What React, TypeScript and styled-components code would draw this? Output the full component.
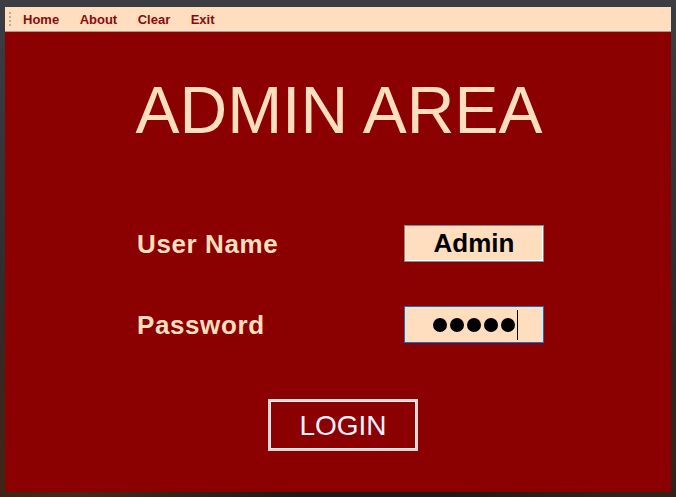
import React from "react";
import styled, { createGlobalStyle } from "styled-components";

const peach = "#FFDEBF";
const wine = "#8B0000";

const GlobalStyle = createGlobalStyle`
	html, body {
		margin: 0;
		padding: 0;
	}
	body {
		width: 676px;
		height: 497px;
		overflow: hidden;
		font-family: "Liberation Sans", Arial, sans-serif;
		background:
			radial-gradient(circle at 10% 95%, #4a2a18 0%, transparent 30%),
			radial-gradient(circle at 95% 90%, #3a2418 0%, transparent 25%),
			linear-gradient(180deg, #3d3e44 0%, #2c2c30 60%, #1d1a18 100%);
	}
`;

function App() {
	return (
		<>
			<GlobalStyle />
			<Desktop>
				<Window>
					<MenuBar>
						<Grip />
						<MenuItem>Home</MenuItem>
						<MenuItem>About</MenuItem>
						<MenuItem>Clear</MenuItem>
						<MenuItem>Exit</MenuItem>
					</MenuBar>
					<Main>
						<Title>ADMIN AREA</Title>
						<Form>
							<Label>User Name</Label>
							<Field>Admin</Field>
							<Label>Password</Label>
							<Field focused>
								<Dots>
									{[0, 1, 2, 3, 4].map((i) => (
										<Dot key={i} />
									))}
								</Dots>
								<Caret />
							</Field>
						</Form>
						<ButtonRow>
							<LoginButton>LOGIN</LoginButton>
						</ButtonRow>
					</Main>
				</Window>
			</Desktop>
		</>
	);
}

export default App;

const Desktop = styled.div`
	padding: 7px 0 0 5px;
`;

const Window = styled.div`
	width: 666px;
	height: 485px;
	display: flex;
	flex-direction: column;
	background: ${wine};
`;

const MenuBar = styled.div`
	height: 24px;
	display: flex;
	align-items: center;
	background: ${peach};
	border-bottom: 1px solid #a89a90;
	padding-left: 4px;
`;

const Grip = styled.div`
	width: 2px;
	height: 14px;
	margin-right: 12px;
	background: repeating-linear-gradient(
		180deg,
		#b8aca0 0px,
		#b8aca0 2px,
		transparent 2px,
		transparent 4px
	);
`;

const MenuItem = styled.span`
	font-size: 13px;
	font-weight: bold;
	color: #8a0a0a;
	margin-right: 20.5px;
	padding-top: 1px;
`;

const Main = styled.div`
	flex: 1;
	display: flex;
	flex-direction: column;
	padding-top: 45px;
`;

const Title = styled.h1`
	margin: 0;
	text-align: center;
	font-size: 66px;
	font-weight: normal;
	line-height: 66px;
	color: ${peach};
	padding-left: 2px;
`;

const Form = styled.div`
	display: grid;
	grid-template-columns: 267px 140px;
	row-gap: 44px;
	align-items: center;
	margin: 82px 0 0 132px;
`;

const Label = styled.div`
	font-size: 26px;
	font-weight: bold;
	letter-spacing: 0.6px;
	color: ${peach};
	padding-top: 2px;
`;

const Field = styled.div<{ focused?: boolean }>`
	box-sizing: border-box;
	height: 37px;
	display: flex;
	align-items: center;
	justify-content: center;
	background: ${peach};
	border: 1px solid ${(p) => (p.focused ? "#0078d7" : "#8a8a8a")};
	box-shadow: ${(p) => (p.focused ? "none" : "inset -1px -1px 0 #ffffff")};
	font-size: 26px;
	font-weight: bold;
	color: #000;
`;

const Dots = styled.div`
	display: flex;
	gap: 3px;
	margin-left: 2px;
`;

const Dot = styled.span`
	width: 14px;
	height: 14px;
	border-radius: 50%;
	background: #000;
`;

const Caret = styled.span`
	width: 1px;
	height: 30px;
	margin-left: 2px;
	background: #000;
`;

const ButtonRow = styled.div`
	display: flex;
	padding: 56px 0 0 263px;
`;

const LoginButton = styled.button`
	box-sizing: border-box;
	width: 150px;
	height: 52px;
	background: ${wine};
	border: 2px solid #d8d8d8;
	box-shadow: inset 0 0 0 1px #ececec;
	font-family: "Liberation Sans", Arial, sans-serif;
	font-size: 28px;
	color: #f4f2ff;
	padding: 2px 0 0;
`;
